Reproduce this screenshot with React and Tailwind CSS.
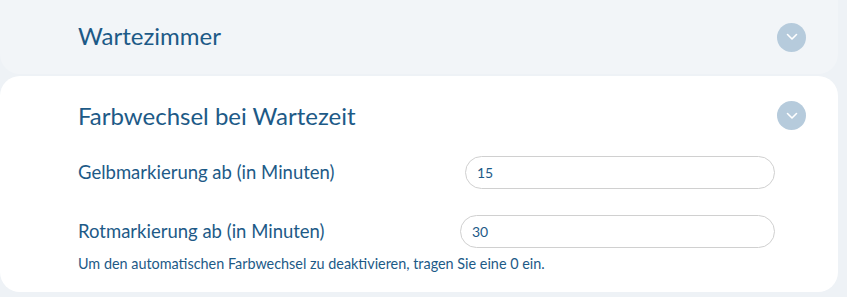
import React from "react";

function Chevron() {
  return (
    <div className="w-[29px] h-[29px] rounded-full bg-[#b6cbdc] flex items-center justify-center shrink-0">
      <svg width="12" height="8" viewBox="0 0 12 8" fill="none">
        <path d="M1.5 1.5 L6 6 L10.5 1.5" stroke="white" strokeWidth="1.6" strokeLinecap="round" strokeLinejoin="round" />
      </svg>
    </div>
  );
}

export default function App() {
  return (
    <div className="w-[847px] h-[297px] overflow-hidden bg-[#eef2f6] text-[#1d5a87]" style={{ fontFamily: "Lato, 'Noto Sans', sans-serif" }}>
      <div className="w-[838px] flex flex-col">
        <div className="bg-[#f2f5f8] rounded-[20px] -mt-[20px] h-[94px] pt-[20px] pl-[78px] pr-[32px] flex items-center justify-between">
          <div className="text-[24px] leading-none -mt-[2px]">Wartezimmer</div>
          <Chevron />
        </div>
        <div className="mt-[2px] bg-white rounded-[20px] h-[216px] pl-[78px] pr-[63px] pt-[25px]">
          <div className="flex items-center justify-between -mr-[31px]">
            <div className="text-[24px] leading-none">Farbwechsel bei Wartezeit</div>
            <Chevron />
          </div>
          <div className="mt-[26px] flex items-center justify-between">
            <div className="text-[18.5px]">Gelbmarkierung ab (in Minuten)</div>
            <div className="w-[310px] h-[33px] rounded-full border border-[#d0d0d0] pl-[11px] flex items-center text-[14px] text-[#1d5a87]">15</div>
          </div>
          <div className="mt-[26px] flex items-center justify-between">
            <div className="text-[18.5px]">Rotmarkierung ab (in Minuten)</div>
            <div className="w-[315px] h-[33px] rounded-full border border-[#d0d0d0] pl-[11px] flex items-center text-[14px] text-[#1d5a87]">30</div>
          </div>
          <div className="mt-[9px] text-[14.4px] leading-none">Um den automatischen Farbwechsel zu deaktivieren, tragen Sie eine 0 ein.</div>
        </div>
      </div>
    </div>
  );
}
